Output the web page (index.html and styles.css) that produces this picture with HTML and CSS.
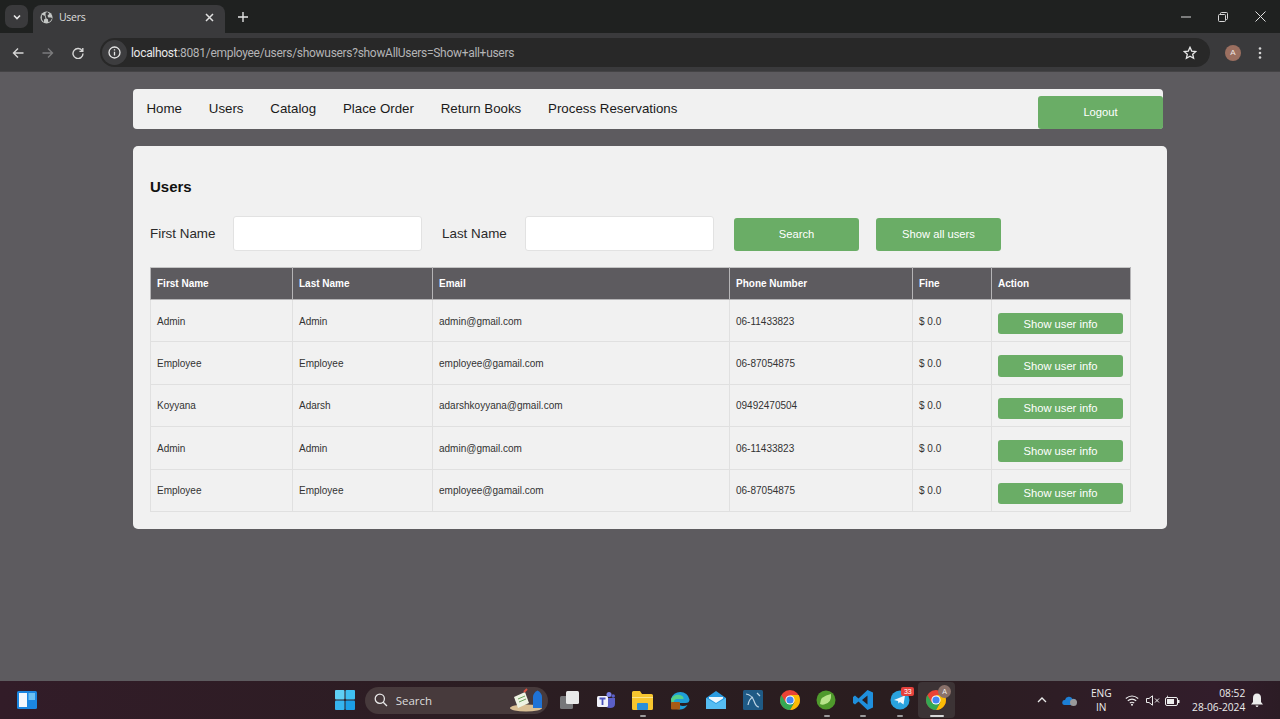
FILE: index.html
```html
<!DOCTYPE html>
<html lang="en">
<head>
    <meta charset="UTF-8">
    <meta name="viewport" content="width=device-width, initial-scale=1.0">
    <title>Users</title>
    <link rel="stylesheet" href="styles.css">
</head>
<body>

    <!-- browser tabs -->
    <div class="tabstrip">
        <div class="tab-search"><svg width="10" height="10" viewBox="0 0 10 10"><path d="M2 3.500 5 6.500 8 3.500" fill="none" stroke="#e8e8e8" stroke-width="1.600"/></svg></div>
        <div class="tab">
            <svg width="13" height="13" viewBox="0 0 14 14"><circle cx="7" cy="7" r="6.500" fill="#c4c7c5"/><path d="M2 4 5 5 6 8 4.500 9 4 12 2 9ZM8 1 10 3 8 5 9 7 12 7 13 8 11 11 9 12 8.500 9 7 8 6 5 6 2Z" fill="#3a3a3c"/></svg>
            <span class="tab-title">Users</span>
            <svg class="tab-close" width="9" height="9" viewBox="0 0 9 9"><path d="M1 1 8 8M8 1 1 8" stroke="#e0e0e0" stroke-width="1.500"/></svg>
        </div>
        <svg class="tab-new" width="10" height="10" viewBox="0 0 11 11"><path d="M5.500 0V11M0 5.500H11" stroke="#e6e6e6" stroke-width="1.500"/></svg>
        <div class="window-btns">
            <svg width="10" height="10" viewBox="0 0 10 10"><path d="M0 5H10" stroke="#d8d8d8"/></svg>
            <svg width="10" height="10" viewBox="0 0 10 10"><path d="M2.500 2.500V1.500Q2.500.5 3.500.5H8.500Q9.500.5 9.500 1.500V6.500Q9.500 7.500 8.500 7.500H7.500M1.500 2.500H6.500Q7.500 2.500 7.500 3.500V8.500Q7.500 9.500 6.500 9.500H1.500Q.5 9.500.5 8.500V3.500Q.5 2.500 1.500 2.500Z" fill="none" stroke="#d8d8d8"/></svg>
            <svg width="11" height="11" viewBox="0 0 11 11"><path d="M.5.5 10.500 10.500M10.500.5.5 10.500" stroke="#e0e0e0"/></svg>
        </div>
    </div>

    <!-- address bar -->
    <div class="toolbar">
        <svg class="nav-icon" width="12" height="12" viewBox="0 0 12 12"><path d="M11.500 6H1.500M6 1.500 1.500 6 6 10.500" fill="none" stroke="#d6d6d6" stroke-width="1.400"/></svg>
        <svg class="nav-icon" width="12" height="12" viewBox="0 0 12 12"><path d="M.5 6H10.500M6 1.500 10.500 6 6 10.500" fill="none" stroke="#7b7b7d" stroke-width="1.400"/></svg>
        <svg class="nav-icon" width="12" height="12" viewBox="0 0 12 12"><path d="M10.300 4A5 5 0 1 0 11 6.500M10.800 1V4.400H7.400" fill="none" stroke="#d6d6d6" stroke-width="1.400"/></svg>
        <div class="omnibox">
            <span class="site-info"><svg width="13" height="13" viewBox="0 0 13 13"><circle cx="6.500" cy="6.500" r="5.500" fill="none" stroke="#e6e6e6" stroke-width="1.300"/><path d="M6.500 5.700V9.500M6.500 3.300V4.600" stroke="#e6e6e6" stroke-width="1.300"/></svg></span>
            <span class="url"><span class="url-host">localhost</span>:8081/employee/users/showusers?showAllUsers=Show+all+users</span>
            <svg class="star" width="14" height="14" viewBox="0 0 14 14"><path d="M7 1.300 8.700 5.100 12.800 5.500 9.700 8.200 10.600 12.300 7 10.200 3.400 12.300 4.300 8.200 1.200 5.500 5.300 5.100Z" fill="none" stroke="#e8e8e8" stroke-width="1.300"/></svg>
        </div>
        <div class="avatar">A</div>
        <svg class="kebab" width="4" height="14" viewBox="0 0 4 14"><circle cx="2" cy="2.500" r="1.300" fill="#d6d6d6"/><circle cx="2" cy="7" r="1.300" fill="#d6d6d6"/><circle cx="2" cy="11.500" r="1.300" fill="#d6d6d6"/></svg>
    </div>

    <div class="page">
        <nav class="navbar">
            <a href="#">Home</a>
            <a href="#">Users</a>
            <a href="#">Catalog</a>
            <a href="#">Place Order</a>
            <a href="#">Return Books</a>
            <a href="#">Process Reservations</a>
            <button class="btn logout">Logout</button>
        </nav>

        <div class="card">
            <h2>Users</h2>

            <form class="search-form">
                <label for="fname">First Name</label>
                <input type="text" id="fname">
                <label for="lname" class="label-last">Last Name</label>
                <input type="text" id="lname">
                <button type="button" class="btn search">Search</button>
                <button type="button" class="btn show-all">Show all users</button>
            </form>

            <table>
                <thead>
                    <tr>
                        <th class="col-first">First Name</th>
                        <th class="col-last">Last Name</th>
                        <th class="col-email">Email</th>
                        <th class="col-phone">Phone Number</th>
                        <th class="col-fine">Fine</th>
                        <th class="col-action">Action</th>
                    </tr>
                </thead>
                <tbody>
                    <tr><td>Admin</td><td>Admin</td><td>admin@gmail.com</td><td>06-11433823</td><td>$ 0.0</td><td><button class="btn info">Show user info</button></td></tr>
                    <tr><td>Employee</td><td>Employee</td><td>employee@gamail.com</td><td>06-87054875</td><td>$ 0.0</td><td><button class="btn info">Show user info</button></td></tr>
                    <tr><td>Koyyana</td><td>Adarsh</td><td>adarshkoyyana@gmail.com</td><td>09492470504</td><td>$ 0.0</td><td><button class="btn info">Show user info</button></td></tr>
                    <tr><td>Admin</td><td>Admin</td><td>admin@gmail.com</td><td>06-11433823</td><td>$ 0.0</td><td><button class="btn info">Show user info</button></td></tr>
                    <tr><td>Employee</td><td>Employee</td><td>employee@gamail.com</td><td>06-87054875</td><td>$ 0.0</td><td><button class="btn info">Show user info</button></td></tr>
                </tbody>
            </table>
        </div>
    </div>

    <!-- windows taskbar -->
    <div class="taskbar">
        <div class="widgets"><svg width="20" height="18" viewBox="0 0 20 18"><rect width="20" height="18" rx="1.500" fill="#1b86e0"/><rect x="2" y="2" width="8" height="14" fill="#f4f8fc"/><rect x="11.500" y="2" width="6.500" height="7" fill="#6cc0f2"/></svg></div>

        <div class="task-btn start"><svg width="20" height="20" viewBox="0 0 20 20"><rect width="9.500" height="9.500" rx="1" fill="#5fd0f5"/><rect x="10.500" width="9.500" height="9.500" rx="1" fill="#3fc0f2"/><rect y="10.500" width="9.500" height="9.500" rx="1" fill="#36b4ee"/><rect x="10.500" y="10.500" width="9.500" height="9.500" rx="1" fill="#1c9fe6"/></svg></div>

        <div class="task-search">
            <svg width="14" height="14" viewBox="0 0 14 14"><circle cx="5.800" cy="5.800" r="4.600" fill="none" stroke="#e8e8e8" stroke-width="1.300"/><path d="M9.200 9.200 13 13" stroke="#e8e8e8" stroke-width="1.300"/></svg>
            <span>Search</span>
            <svg class="search-art" width="34" height="24" viewBox="0 0 34 24"><ellipse cx="16" cy="20" rx="16" ry="3.500" fill="#d9bf94"/><path d="M4 9 15 4 19 15 8 20Z" fill="#eef3e2"/><path d="M8 11 15 8M9 14 16 11" stroke="#6aa05a"/><path d="M14 4 17 1" stroke="#d8503f" stroke-width="2"/><path d="M23 20V9Q23 5 27.500 2.500 32 5 32 9V20Z" fill="#1f73d6"/></svg>
        </div>

        <div class="task-btn"><svg width="20" height="20" viewBox="0 0 20 20"><rect y="6" width="13" height="13" rx="1.500" fill="#77777a"/><rect x="6" y="1" width="13" height="13" rx="1.500" fill="#e9e9e9"/></svg></div>
        <div class="task-btn"><svg width="20" height="20" viewBox="0 0 20 20"><circle cx="13" cy="4.500" r="2.500" fill="#7b83eb"/><circle cx="17.200" cy="6" r="1.800" fill="#5b5fc7"/><path d="M9 8H19V14Q19 18 14 18 9 18 9 14Z" fill="#5b5fc7"/><rect x="1" y="6" width="11" height="11" rx="1.500" fill="#f2f3fb"/><path d="M3.500 8.500H9.500M6.500 8.500V15" stroke="#4b53bc" stroke-width="1.800"/></svg></div>
        <div class="task-btn running"><svg width="21" height="19" viewBox="0 0 21 19"><path d="M0 1.500Q0 0 1.500 0H8L10 3H19.500Q21 3 21 4.500V17.500Q21 19 19.500 19H1.500Q0 19 0 17.500Z" fill="#f7c62f"/><path d="M0 6H21V7H0Z" fill="#fbe58a"/><rect x="5" y="12" width="11" height="7" rx="1" fill="#2a8fd8"/></svg></div>
        <div class="task-btn"><svg width="20" height="20" viewBox="0 0 20 20"><path d="M1 9A9.500 9.500 0 0 1 19.500 9.500Q19.500 13 15.500 13H8.500Q9 16 13 16 15.500 16 17.500 15 14.500 19.500 10 19.500 1 19 1 9Z" fill="#1f9fd8"/><path d="M1 9Q4 4 10 5 14 6 13.500 9H7Q4 9 3.500 13 3 16 5 18 1 15 1 9Z" fill="#54d18a"/><rect x="1" y="12" width="9" height="7.500" rx="1" fill="#a85b17"/></svg></div>
        <div class="task-btn"><svg width="20" height="18" viewBox="0 0 20 18"><path d="M0 7 10 0 20 7V18H0Z" fill="#2a9be0"/><path d="M0 7 10 13 20 7V18H0Z" fill="#56bdf2"/><path d="M3 6H17V7.500L10 12 3 7.500Z" fill="#eef8fe"/></svg></div>
        <div class="task-btn"><svg width="20" height="20" viewBox="0 0 20 20"><rect width="20" height="20" rx="1.500" fill="#1f5a85"/><path d="M3 4Q9 5 11 11T16 17M5 15Q6 9 10 7M14 3 17 6" fill="none" stroke="#bcd3e4" stroke-width="1.200"/></svg></div>
        <div class="task-btn"><svg width="20" height="20" viewBox="0 0 20 20"><use href="#chrome-logo"/></svg></div>
        <div class="task-btn running"><svg width="20" height="20" viewBox="0 0 20 20"><circle cx="10" cy="10" r="9.500" fill="#4f9a2c"/><path d="M4 14Q4 6 15 4 16 13 8 14.500 6 15 4 14Z" fill="#b7e48a"/></svg></div>
        <div class="task-btn running"><svg width="20" height="20" viewBox="0 0 20 20"><path d="M14.500 0 20 2.500V17.500L14.500 20 5.500 11.500 2 14.500 0 13V7L2 5.500 5.500 8.500ZM14.500 5.500 9 10 14.500 14.500Z" fill="#1f8fdc"/></svg></div>
        <div class="task-btn running">
            <svg width="20" height="20" viewBox="0 0 20 20"><circle cx="10" cy="10" r="9.500" fill="#2aa3de"/><path d="M4 10 15 5.500 13.500 14.500 10 12 8.500 13.500 8 11Z" fill="#f2f8fc"/></svg>
            <span class="badge">33</span>
        </div>
        <div class="task-btn active">
            <svg width="20" height="20" viewBox="0 0 20 20"><use href="#chrome-logo"/></svg>
            <span class="profile-badge">A</span>
        </div>

        <div class="tray">
            <svg width="10" height="6" viewBox="0 0 10 6"><path d="M1 5 5 1 9 5" fill="none" stroke="#eaeaea" stroke-width="1.300"/></svg>
            <svg class="tray-cloud" width="15" height="11" viewBox="0 0 15 11"><path d="M2.500 10A2.500 2.500 0 0 1 3 5 4 4 0 0 1 10.500 4 3 3 0 0 1 12 10Z" fill="#1c7fd6"/><circle cx="11.500" cy="7.500" r="3.500" fill="#9a9a9a"/></svg>
            <div class="lang">ENG<br>IN</div>
            <svg class="tray-wifi" width="14" height="11" viewBox="0 0 14 11"><path d="M.8 3.500Q7-1.500 13.200 3.500M2.800 5.800Q7 2.500 11.200 5.800M4.800 8Q7 6.500 9.200 8" fill="none" stroke="#ededed" stroke-width="1.100"/><circle cx="7" cy="9.800" r="1" fill="#ededed"/></svg>
            <svg class="tray-sound" width="14" height="11" viewBox="0 0 14 11"><path d="M.5 3.500H3L6.500.8V10.200L3 7.500H.5Z" fill="none" stroke="#ededed"/><path d="M9 3.500 13 7.500M13 3.500 9 7.500" stroke="#ededed"/></svg>
            <svg class="tray-battery" width="15" height="11" viewBox="0 0 15 11"><rect x=".5" y="2.500" width="12" height="8" rx="1.500" fill="none" stroke="#ededed"/><rect x="2" y="4" width="7" height="5" fill="#ededed"/><rect x="13" y="5" width="1.500" height="3" fill="#ededed"/><path d="M2 0 3.500 3 2 3Z" fill="#ededed"/></svg>
            <div class="clock">08:52<br>28-06-2024</div>
            <svg class="tray-bell" width="12" height="14" viewBox="0 0 12 14"><path d="M6 .5Q10 .5 10 5V9L12 11.500H0L2 9V5Q2 .5 6 .5Z" fill="#ededed"/><path d="M4.500 12.500H7.500Q7 14 6 14T4.500 12.500Z" fill="#ededed"/></svg>
        </div>
    </div>

    <svg class="svg-defs" width="0" height="0">
        <symbol id="chrome-logo" viewBox="0 0 20 20">
            <circle cx="10" cy="10" r="10" fill="#ea4335"/>
            <path d="M10 20A10 10 0 0 0 18.660 5H10L14.330 12.500 10 20Z" fill="#fbbc05"/>
            <path d="M1.340 5A10 10 0 0 0 10 20L14.330 12.500H5.670Z" fill="#34a853"/>
            <circle cx="10" cy="10" r="4.600" fill="#fff"/>
            <circle cx="10" cy="10" r="3.600" fill="#4285f4"/>
        </symbol>
    </svg>

</body>
</html>
```

FILE: styles.css
```css
* {
    box-sizing: border-box;
}

html, body {
    height: 100%;
}

body {
    margin: 0;
    display: flex;
    flex-direction: column;
    overflow: hidden;
    font-family: "Liberation Sans", Arial, sans-serif;
    background-color: #5d5b5f;
}

/* browser chrome */
.tabstrip {
    display: flex;
    align-items: flex-end;
    height: 33px;
    padding-left: 5px;
    background-color: #1f2120;
}

.tab-search {
    display: flex;
    align-items: center;
    justify-content: center;
    width: 23px;
    height: 23px;
    margin-bottom: 5px;
    border-radius: 7px;
    background-color: #3a3a3c;
}

.tab {
    display: flex;
    align-items: center;
    width: 192px;
    height: 28px;
    margin-left: 5px;
    padding: 0 11px 4px 7px;
    border-radius: 8px 8px 0 0;
    background-color: #3a3a3c;
}

.tab-title {
    flex: 1;
    margin-left: 6px;
    font-family: "Open Sans", sans-serif;
    font-size: 10.500px;
    letter-spacing: -0.3px;
    color: #dedede;
}

.tab-new {
    margin: 0 0 11px 13px;
}

.window-btns {
    display: flex;
    align-items: center;
    gap: 27px;
    margin: 0 14px 11px auto;
}

.toolbar {
    display: flex;
    align-items: center;
    height: 39px;
    padding: 1px 0 0 12px;
    background-color: #3a3a3c;
    border-bottom: 1px solid #444345;
}

.nav-icon {
    margin-right: 18px;
}

.omnibox {
    display: flex;
    align-items: center;
    width: 1110px;
    height: 29px;
    margin-left: -2px;
    padding-right: 13px;
    border-radius: 15px;
    background-color: #282828;
}

.site-info {
    display: flex;
    align-items: center;
    justify-content: center;
    width: 25px;
    height: 25px;
    margin-left: 2px;
    border-radius: 50%;
    background-color: #3d3d3f;
}

.url {
    flex: 1;
    margin-left: 4px;
    font-family: Roboto, sans-serif;
    font-size: 12px;
    letter-spacing: -0.3px;
    color: #b4b4b6;
}

.url-host {
    color: #e8e8e8;
}

.avatar {
    width: 16px;
    height: 16px;
    margin-left: 15px;
    border-radius: 50%;
    background-color: #9b6f60;
    color: #f0e6e2;
    font-size: 8px;
    line-height: 16px;
    text-align: center;
}

.kebab {
    margin-left: 17px;
}

/* the page itself */
.page {
    flex: 1;
    width: 1034px;
    margin-left: 133px;
    padding-top: 17px;
}

.navbar {
    display: flex;
    align-items: flex-start;
    width: 1030px;
    height: 40px;
    padding-left: 13.500px;
    border-radius: 4px;
    background-color: #f1f1f1;
}

.navbar a {
    margin-right: 26.800px;
    padding-top: 11.500px;
    font-size: 13.300px;
    color: #1a1a1a;
    text-decoration: none;
}

.btn {
    border: none;
    border-radius: 3px;
    background-color: #6aad66;
    color: #fff;
    font-family: "Liberation Sans", Arial, sans-serif;
    font-size: 11.200px;
    cursor: pointer;
}

.logout {
    width: 125px;
    height: 33px;
    margin: 7px 0 0 auto;
    padding-bottom: 3px;
}

.card {
    height: 383px;
    margin-top: 17px;
    padding: 32px 36px 0 17px;
    border-radius: 5px;
    background-color: #f1f1f1;
}

h2 {
    margin: 0;
    font-size: 15px;
    line-height: 17px;
    color: #111;
}

.search-form {
    display: flex;
    align-items: center;
    height: 35px;
    margin-top: 21px;
}

label {
    width: 83px;
    font-size: 13.400px;
    color: #2a2a2a;
}

.label-last {
    width: 83px;
    margin-left: 20px;
}

input {
    width: 189px;
    height: 35px;
    border: 1px solid #e2e2e2;
    border-radius: 3px;
    background-color: #fff;
}

.search {
    width: 125px;
    height: 33px;
    margin: 1px 0 0 20px;
}

.show-all {
    width: 125px;
    height: 33px;
    margin: 1px 0 0 17px;
}

table {
    width: 980px;
    margin-top: 16px;
    border-collapse: collapse;
    table-layout: fixed;
    font-size: 10px;
    color: #333;
}

th {
    height: 32px;
    padding: 0 6px;
    border: 1px solid #b5b4b6;
    border-top-color: #c4c4c4;
    background-color: #5d5b5f;
    color: #fff;
    text-align: left;
}

td {
    height: 42.400px;
    padding: 1px 6px 0;
    border: 1px solid #e0e0e0;
}

.col-first { width: 142px; }
.col-last { width: 140px; }
.col-email { width: 297px; }
.col-phone { width: 183px; }
.col-fine { width: 79px; }
.col-action { width: 139px; }

.info {
    display: block;
    width: 125px;
    height: 21.500px;
    margin-top: 5px;
}

/* windows taskbar */
.taskbar {
    display: flex;
    align-items: center;
    height: 38px;
    padding-left: 17px;
    background: linear-gradient(90deg, #321c28 0%, #2b1d22 40%, #2a1d1f 70%, #321d2b 95%, #2c1c25 100%);
}

.widgets {
    display: flex;
    width: 310px;
}

.task-btn {
    position: relative;
    display: flex;
    align-items: center;
    justify-content: center;
    flex-shrink: 0;
    width: 36.700px;
    height: 36px;
}

.start {
    margin-right: 1px;
}

.running::after,
.active::after {
    content: "";
    position: absolute;
    left: 15.500px;
    bottom: 1px;
    width: 6px;
    height: 2px;
    border-radius: 1px;
    background-color: #9c9a9b;
}

.active {
    border-radius: 4px;
    background-color: #3c3335;
}

.active::after {
    left: 11.500px;
    width: 14px;
    background-color: #d8d8d8;
}

.badge {
    position: absolute;
    top: 5px;
    left: 20px;
    min-width: 13px;
    height: 9px;
    border-radius: 2px;
    background-color: #e5413c;
    color: #fff;
    font-size: 7px;
    line-height: 9px;
    text-align: center;
}

.profile-badge {
    position: absolute;
    top: 3px;
    left: 20px;
    width: 13px;
    height: 13px;
    border-radius: 50%;
    background-color: #8a716a;
    color: #eee;
    font-size: 7px;
    line-height: 13px;
    text-align: center;
}

.task-search {
    display: flex;
    align-items: center;
    flex-shrink: 0;
    width: 183px;
    height: 27px;
    margin-right: 3.500px;
    padding: 0 0 0 9px;
    border-radius: 14px;
    background-color: #473a3c;
    color: #dcdcdc;
    font-family: "Open Sans", sans-serif;
    font-size: 11.500px;
}

.task-search span {
    margin-left: 8px;
}

.search-art {
    margin-left: auto;
    margin-right: 4px;
}

.tray {
    display: flex;
    align-items: center;
    margin-left: 82.500px;
    color: #ececec;
    font-family: "Open Sans", sans-serif;
    font-size: 10.200px;
    line-height: 14px;
}

.tray-cloud {
    margin-left: 15px;
}

.lang {
    width: 24px;
    margin-left: 12px;
    text-align: center;
}

.tray-wifi {
    margin-left: 12px;
}

.tray-sound {
    margin-left: 7px;
}

.tray-battery {
    margin-left: 5px;
}

.clock {
    width: 65px;
    margin-left: 0;
    text-align: right;
}

.tray-bell {
    margin-left: 6px;
}

.svg-defs {
    position: absolute;
}
```
